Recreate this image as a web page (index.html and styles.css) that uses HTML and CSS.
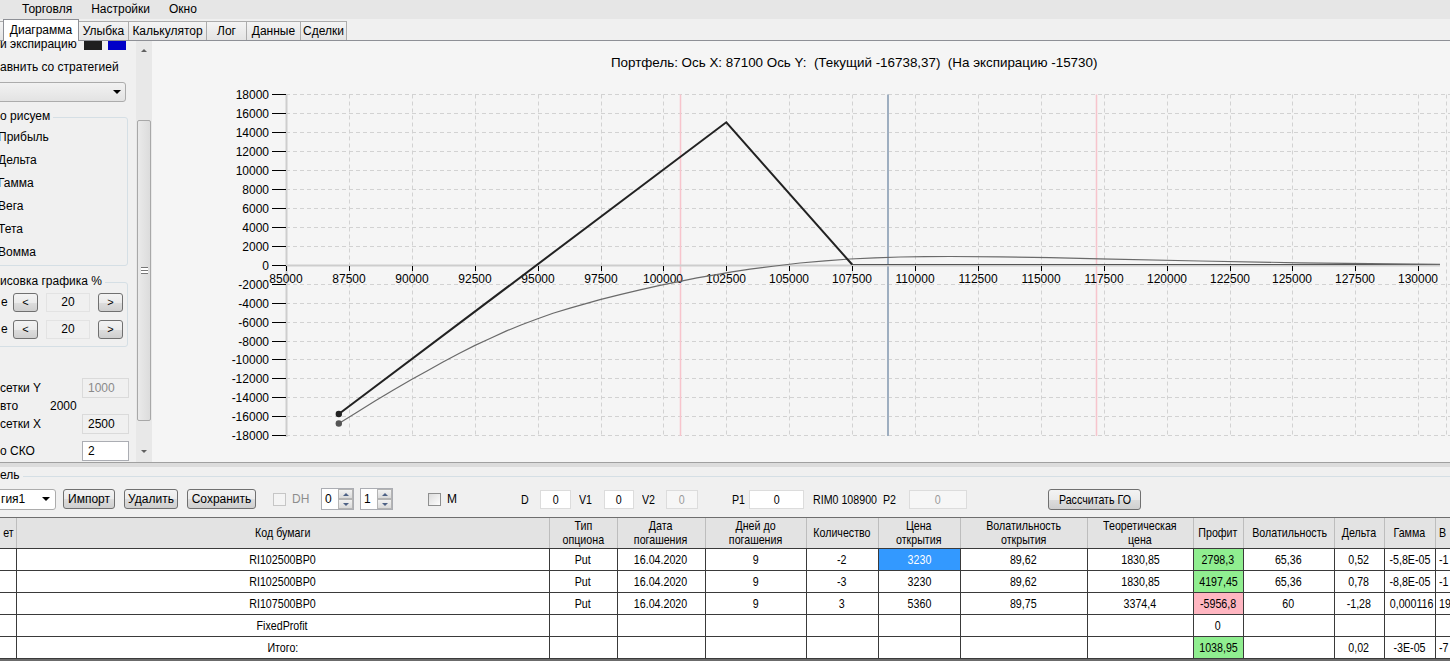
FILE: index.html
```html
<!DOCTYPE html>
<html lang="ru">
<head>
<meta charset="utf-8">
<title>Диаграмма</title>
<link rel="stylesheet" href="styles.css">
</head>
<body>
<div class="menubar">
  <span class="mi">Торговля</span>
  <span class="mi">Настройки</span>
  <span class="mi">Окно</span>
</div>
<div class="tabs">
  <div class="tab t0"></div>
  <div class="tab sel t1">Диаграмма</div>
  <div class="tab t2">Улыбка</div>
  <div class="tab t3">Калькулятор</div>
  <div class="tab t4">Лог</div>
  <div class="tab t5">Данные</div>
  <div class="tab t6">Сделки</div>
</div>
<div class="main">
  <aside class="side">
    <div class="side-inner">
      <div class="row r-exp"><span class="lbl">и экспирацию</span><span class="sw sw-black"></span><span class="sw sw-blue"></span></div>
      <div class="row r-cmp">авнить со стратегией</div>
      <div class="combo"><span class="arrow"></span></div>
      <div class="group g1">
        <div class="legend">о рисуем</div>
        <div class="item">Прибыль</div>
        <div class="item">Дельта</div>
        <div class="item">Гамма</div>
        <div class="item">Вега</div>
        <div class="item">Тета</div>
        <div class="item">Вомма</div>
      </div>
      <div class="group g2">
        <div class="legend">исовка графика %</div>
        <div class="steprow"><span class="e">е</span><span class="btn sm">&lt;</span><span class="tb ro">20</span><span class="btn sm">&gt;</span></div>
        <div class="steprow s2"><span class="e">е</span><span class="btn sm">&lt;</span><span class="tb ro">20</span><span class="btn sm">&gt;</span></div>
      </div>
      <div class="frow f1"><span class="fl">сетки Y</span><span class="tb dis">1000</span></div>
      <div class="frow f2"><span class="fl short">вто</span><span>2000</span></div>
      <div class="frow f3"><span class="fl">сетки X</span><span class="tb ro">2500</span></div>
      <div class="frow f4"><span class="fl">о СКО</span><span class="tb wh">2</span></div>
    </div>
  </aside>
  <div class="vscroll">
    <span class="up"></span>
    <div class="thumb"><span class="grip"></span></div>
    <span class="down"></span>
  </div>
  <section class="chart">
    <div class="title">Портфель: Ось X: 87100 Ось Y:  (Текущий -16738,37)  (На экспирацию -15730)</div>
    <svg class="plot" width="1298" height="377" viewBox="152 85 1298 377" xmlns="http://www.w3.org/2000/svg">
      <g stroke="#d2d2d2" stroke-width="1" stroke-dasharray="4 3" fill="none">
        <line x1="349.5" y1="94.5" x2="349.5" y2="436"/>
        <line x1="412.5" y1="94.5" x2="412.5" y2="436"/>
        <line x1="475.5" y1="94.5" x2="475.5" y2="436"/>
        <line x1="538.5" y1="94.5" x2="538.5" y2="436"/>
        <line x1="601.5" y1="94.5" x2="601.5" y2="436"/>
        <line x1="663.5" y1="94.5" x2="663.5" y2="436"/>
        <line x1="726.5" y1="94.5" x2="726.5" y2="436"/>
        <line x1="789.5" y1="94.5" x2="789.5" y2="436"/>
        <line x1="852.5" y1="94.5" x2="852.5" y2="436"/>
        <line x1="915.5" y1="94.5" x2="915.5" y2="436"/>
        <line x1="978.5" y1="94.5" x2="978.5" y2="436"/>
        <line x1="1041.5" y1="94.5" x2="1041.5" y2="436"/>
        <line x1="1104.5" y1="94.5" x2="1104.5" y2="436"/>
        <line x1="1167.5" y1="94.5" x2="1167.5" y2="436"/>
        <line x1="1230.5" y1="94.5" x2="1230.5" y2="436"/>
        <line x1="1292.5" y1="94.5" x2="1292.5" y2="436"/>
        <line x1="1355.5" y1="94.5" x2="1355.5" y2="436"/>
        <line x1="1418.5" y1="94.5" x2="1418.5" y2="436"/>
        <line x1="1446.5" y1="94.5" x2="1446.5" y2="436"/>
        <line x1="286" y1="94.5" x2="1450" y2="94.5"/>
        <line x1="286" y1="113.5" x2="1450" y2="113.5"/>
        <line x1="286" y1="132.5" x2="1450" y2="132.5"/>
        <line x1="286" y1="151.5" x2="1450" y2="151.5"/>
        <line x1="286" y1="170.5" x2="1450" y2="170.5"/>
        <line x1="286" y1="189.5" x2="1450" y2="189.5"/>
        <line x1="286" y1="208.5" x2="1450" y2="208.5"/>
        <line x1="286" y1="227.5" x2="1450" y2="227.5"/>
        <line x1="286" y1="246.5" x2="1450" y2="246.5"/>
        <line x1="286" y1="284.5" x2="1450" y2="284.5"/>
        <line x1="286" y1="303.5" x2="1450" y2="303.5"/>
        <line x1="286" y1="322.5" x2="1450" y2="322.5"/>
        <line x1="286" y1="341.5" x2="1450" y2="341.5"/>
        <line x1="286" y1="359.5" x2="1450" y2="359.5"/>
        <line x1="286" y1="378.5" x2="1450" y2="378.5"/>
        <line x1="286" y1="397.5" x2="1450" y2="397.5"/>
        <line x1="286" y1="416.5" x2="1450" y2="416.5"/>
        <line x1="286" y1="435.5" x2="1450" y2="435.5"/>
      </g>
      <line x1="680.5" y1="94.5" x2="680.5" y2="436" stroke="#f7c4cc" stroke-width="1.5"/>
      <line x1="1096.5" y1="94.5" x2="1096.5" y2="436" stroke="#f7c4cc" stroke-width="1.5"/>
      <line x1="888" y1="94.5" x2="888" y2="436" stroke="#9eaec0" stroke-width="2"/>
      <line x1="286.5" y1="94" x2="286.5" y2="437" stroke="#cdcdcd" stroke-width="2"/>
      <line x1="286" y1="265.5" x2="1440" y2="265.5" stroke="#cdcdcd" stroke-width="2"/>
      <g stroke="#000" stroke-width="1">
        <line x1="272" y1="94.5" x2="286" y2="94.5"/>
        <line x1="272" y1="113.5" x2="286" y2="113.5"/>
        <line x1="272" y1="132.5" x2="286" y2="132.5"/>
        <line x1="272" y1="151.5" x2="286" y2="151.5"/>
        <line x1="272" y1="170.5" x2="286" y2="170.5"/>
        <line x1="272" y1="189.5" x2="286" y2="189.5"/>
        <line x1="272" y1="208.5" x2="286" y2="208.5"/>
        <line x1="272" y1="227.5" x2="286" y2="227.5"/>
        <line x1="272" y1="246.5" x2="286" y2="246.5"/>
        <line x1="272" y1="265.5" x2="286" y2="265.5"/>
        <line x1="272" y1="284.5" x2="286" y2="284.5"/>
        <line x1="272" y1="303.5" x2="286" y2="303.5"/>
        <line x1="272" y1="322.5" x2="286" y2="322.5"/>
        <line x1="272" y1="341.5" x2="286" y2="341.5"/>
        <line x1="272" y1="359.5" x2="286" y2="359.5"/>
        <line x1="272" y1="378.5" x2="286" y2="378.5"/>
        <line x1="272" y1="397.5" x2="286" y2="397.5"/>
        <line x1="272" y1="416.5" x2="286" y2="416.5"/>
        <line x1="272" y1="435.5" x2="286" y2="435.5"/>
        <line x1="286.5" y1="266" x2="286.5" y2="271"/>
        <line x1="349.5" y1="266" x2="349.5" y2="271"/>
        <line x1="412.5" y1="266" x2="412.5" y2="271"/>
        <line x1="475.5" y1="266" x2="475.5" y2="271"/>
        <line x1="538.5" y1="266" x2="538.5" y2="271"/>
        <line x1="601.5" y1="266" x2="601.5" y2="271"/>
        <line x1="663.5" y1="266" x2="663.5" y2="271"/>
        <line x1="726.5" y1="266" x2="726.5" y2="271"/>
        <line x1="789.5" y1="266" x2="789.5" y2="271"/>
        <line x1="852.5" y1="266" x2="852.5" y2="271"/>
        <line x1="915.5" y1="266" x2="915.5" y2="271"/>
        <line x1="978.5" y1="266" x2="978.5" y2="271"/>
        <line x1="1041.5" y1="266" x2="1041.5" y2="271"/>
        <line x1="1104.5" y1="266" x2="1104.5" y2="271"/>
        <line x1="1167.5" y1="266" x2="1167.5" y2="271"/>
        <line x1="1230.5" y1="266" x2="1230.5" y2="271"/>
        <line x1="1292.5" y1="266" x2="1292.5" y2="271"/>
        <line x1="1355.5" y1="266" x2="1355.5" y2="271"/>
        <line x1="1418.5" y1="266" x2="1418.5" y2="271"/>
      </g>
      <g class="ylab" text-anchor="end">
        <text x="269" y="99">18000</text>
        <text x="269" y="118">16000</text>
        <text x="269" y="137">14000</text>
        <text x="269" y="156">12000</text>
        <text x="269" y="175">10000</text>
        <text x="269" y="194">8000</text>
        <text x="269" y="213">6000</text>
        <text x="269" y="232">4000</text>
        <text x="269" y="251">2000</text>
        <text x="269" y="270">0</text>
        <text x="269" y="289">-2000</text>
        <text x="269" y="308">-4000</text>
        <text x="269" y="327">-6000</text>
        <text x="269" y="346">-8000</text>
        <text x="269" y="364">-10000</text>
        <text x="269" y="383">-12000</text>
        <text x="269" y="402">-14000</text>
        <text x="269" y="421">-16000</text>
        <text x="269" y="440">-18000</text>
      </g>
      <g class="xlab" text-anchor="middle">
        <text x="286" y="283">85000</text>
        <text x="349" y="283">87500</text>
        <text x="412" y="283">90000</text>
        <text x="475" y="283">92500</text>
        <text x="538" y="283">95000</text>
        <text x="601" y="283">97500</text>
        <text x="663" y="283">100000</text>
        <text x="726" y="283">102500</text>
        <text x="789" y="283">105000</text>
        <text x="852" y="283">107500</text>
        <text x="915" y="283">110000</text>
        <text x="978" y="283">112500</text>
        <text x="1041" y="283">115000</text>
        <text x="1104" y="283">117500</text>
        <text x="1167" y="283">120000</text>
        <text x="1230" y="283">122500</text>
        <text x="1292" y="283">125000</text>
        <text x="1355" y="283">127500</text>
        <text x="1418" y="283">130000</text>
      </g>
      <line x1="852" y1="264.5" x2="1440" y2="264.5" stroke="#555" stroke-width="1"/>
      <polyline fill="none" stroke="#6a6a6a" stroke-width="1.2" stroke-linejoin="round" points="338.8,423.5 357,412.3 375,401.1 393,390.3 411.5,379.6 427,370.9 443,362 459,353.5 475,345.4 490,338.5 506,331.1 521,325 537,319 553,313.3 570,308.1 585,303.8 600,299.7 620,294.6 640,289.9 660,285.4 680,281.3 697,277.9 715,274.8 732,271.9 750,269.2 775,266 800,263 825,260.9 850,259 875,257.9 900,257 925,256.6 950,256.5 1000,256.8 1050,257.7 1100,258.8 1200,261 1300,262.8 1370,263.7 1440,264.4"/>
      <polyline fill="none" stroke="#222" stroke-width="2" points="338.8,414 726.3,122.3 852.1,264.5"/>
      <circle cx="338.8" cy="414" r="3.2" fill="#222"/>
      <circle cx="338.8" cy="423.5" r="3.2" fill="#555"/>
    </svg>
  </section>
</div>
<div class="splitter"></div>
<div class="bottom">
  <div class="ghead"><span class="glabel">ель</span><span class="gline"></span></div>
  <div class="toolbar">
    <div class="bcombo"><span>гия1</span><span class="arrow"></span></div>
    <span class="btn b-imp">Импорт</span>
    <span class="btn b-del">Удалить</span>
    <span class="btn b-save">Сохранить</span>
    <span class="chk dis c-dh"></span>
    <span class="lab dis l-dh">DH</span>
    <span class="num n0"><span class="nv">0</span><span class="spin"><i class="su"></i><i class="sd"></i></span></span>
    <span class="num n1"><span class="nv">1</span><span class="spin"><i class="su"></i><i class="sd"></i></span></span>
    <span class="chk c-m"></span>
    <span class="lab l-m">M</span>
    <span class="nar l-d"><span class="sq">D</span></span>
    <span class="tbx t-d"><span class="sq">0</span></span>
    <span class="nar l-v1"><span class="sq">V1</span></span>
    <span class="tbx t-v1"><span class="sq">0</span></span>
    <span class="nar l-v2"><span class="sq">V2</span></span>
    <span class="tbx dis t-v2"><span class="sq">0</span></span>
    <span class="nar l-p1"><span class="sq">P1</span></span>
    <span class="tbx t-p1"><span class="sq">0</span></span>
    <span class="nar l-rim"><span class="sq">RIM0 108900</span></span>
    <span class="nar l-p2"><span class="sq">P2</span></span>
    <span class="tbx dis t-p2"><span class="sq">0</span></span>
    <span class="btn nar b-go"><span class="sq">Рассчитать ГО</span></span>
  </div>
  <div class="gridwrap">
    <table class="grid">
      <colgroup>
        <col class="w0"><col class="w1"><col class="w2"><col class="w3"><col class="w4"><col class="w5"><col class="w6"><col class="w7"><col class="w8"><col class="w9"><col class="w10"><col class="w11"><col class="w12"><col class="w13">
      </colgroup>
      <thead>
        <tr>
          <th class="first"><span>ет</span></th><th><span>Код бумаги</span></th><th><span>Тип<br>опциона</span></th><th><span>Дата<br>погашения</span></th><th><span>Дней до<br>погашения</span></th><th><span>Количество</span></th><th><span>Цена<br>открытия</span></th><th><span>Волатильность<br>открытия</span></th><th><span>Теоретическая<br>цена</span></th><th><span>Профит</span></th><th><span>Волатильность</span></th><th><span>Дельта</span></th><th><span>Гамма</span></th><th class="last"><span>В</span></th>
        </tr>
      </thead>
      <tbody>
        <tr><td></td><td><span>RI102500BP0</span></td><td><span>Put</span></td><td><span>16.04.2020</span></td><td><span>9</span></td><td><span>-2</span></td><td class="blue"><span>3230</span></td><td><span>89,62</span></td><td><span>1830,85</span></td><td class="green"><span>2798,3</span></td><td><span>65,36</span></td><td><span>0,52</span></td><td><span>-5,8E-05</span></td><td class="last"><span>-1</span></td></tr>
        <tr><td></td><td><span>RI102500BP0</span></td><td><span>Put</span></td><td><span>16.04.2020</span></td><td><span>9</span></td><td><span>-3</span></td><td><span>3230</span></td><td><span>89,62</span></td><td><span>1830,85</span></td><td class="green"><span>4197,45</span></td><td><span>65,36</span></td><td><span>0,78</span></td><td><span>-8,8E-05</span></td><td class="last"><span>-1</span></td></tr>
        <tr><td></td><td><span>RI107500BP0</span></td><td><span>Put</span></td><td><span>16.04.2020</span></td><td><span>9</span></td><td><span>3</span></td><td><span>5360</span></td><td><span>89,75</span></td><td><span>3374,4</span></td><td class="pink"><span>-5956,8</span></td><td><span>60</span></td><td><span>-1,28</span></td><td><span>0,000116</span></td><td class="last"><span>19</span></td></tr>
        <tr><td></td><td><span>FixedProfit</span></td><td></td><td></td><td></td><td></td><td></td><td></td><td></td><td><span>0</span></td><td></td><td></td><td></td><td class="last"></td></tr>
        <tr><td></td><td><span>Итого:</span></td><td></td><td></td><td></td><td></td><td></td><td></td><td></td><td class="green"><span>1038,95</span></td><td></td><td><span>0,02</span></td><td><span>-3E-05</span></td><td class="last"><span>-7</span></td></tr>
      </tbody>
    </table>
  </div>
  <div class="hbar"></div>
</div>
</body>
</html>
```
FILE: styles.css
```css
* { box-sizing: border-box; }
html, body { margin: 0; padding: 0; }
body {
  width: 1450px;
  height: 661px;
  overflow: hidden;
  background: #f0f0f0;
  font-family: "Liberation Sans", Arial, sans-serif;
  font-size: 12px;
  color: #000;
}

/* menu */
.menubar {
  height: 19px;
  background: #e6e6e6;
  display: flex;
  align-items: center;
  padding-left: 22px;
  padding-bottom: 2px;
  gap: 19px;
  font-size: 12px;
}

/* tabs */
.tabs {
  height: 22px;
  display: flex;
  align-items: flex-end;
  border-bottom: 1px solid #8e9096;
  background: #f0f0f0;
}
.tab {
  height: 19px;
  margin-left: -1px;
  border: 1px solid #acacac;
  border-bottom: none;
  background: linear-gradient(#f4f4f4, #e4e4e4);
  text-align: center;
  line-height: 18px;
  white-space: nowrap;
  overflow: hidden;
}
.tab.sel {
  height: 22px;
  margin-bottom: -1px;
  background: #fff;
  border-color: #8e9096;
  line-height: 20px;
  position: relative;
  z-index: 1;
}
.t0 { width: 5px; margin-left: -1px; }
.t1 { width: 76px; }
.t2 { width: 51px; }
.t3 { width: 79px; }
.t4 { width: 41px; }
.t5 { width: 55px; }
.t6 { width: 47px; }

/* main area */
.main {
  height: 421px;
  display: flex;
}
.side {
  width: 136px;
  overflow: hidden;
  background: #f0f0f0;
}
.side-inner {
  margin-top: -6px;
}
.row { white-space: nowrap; }
.r-exp {
  height: 20px;
  display: flex;
  align-items: flex-start;
  line-height: 19px;
}
.r-exp .lbl { width: 84px; }
.sw {
  width: 18px;
  height: 15px;
}
.sw-black { background: #1f1f1f; }
.sw-blue { background: #0000c8; margin-left: 6px; }
.r-cmp {
  height: 24px;
  line-height: 24px;
}
.combo {
  margin-top: 3px;
  margin-left: -8px;
  width: 134px;
  height: 20px;
  border: 1px solid #acacac;
  border-radius: 3px;
  background: linear-gradient(#f2f2f2, #e3e3e3);
  display: flex;
  justify-content: flex-end;
  align-items: center;
  padding-right: 4px;
}
.arrow {
  width: 0;
  height: 0;
  border-left: 4px solid transparent;
  border-right: 4px solid transparent;
  border-top: 4px solid #000;
}
.group {
  margin-left: -10px;
  width: 138px;
  border: 1px solid #d5dfe5;
  border-radius: 3px;
}
.legend {
  width: max-content;
  margin-top: -10px;
  margin-left: 9px;
  padding-right: 3px;
  height: 16px;
  line-height: 16px;
  background: #f0f0f0;
  white-space: nowrap;
}
.g1 { margin-top: 15px; height: 149px; }
.g1 .item {
  height: 23px;
  line-height: 23px;
  padding-left: 7px;
}
.g1 .legend + .item { margin-top: 2px; }
.g2 { margin-top: 16px; height: 65px; }
.steprow {
  display: flex;
  align-items: center;
  height: 20px;
  margin-top: 3px;
  padding-left: 10px;
}
.steprow.s2 { margin-top: 7px; }
.steprow .e { width: 12px; }
.btn {
  display: inline-flex;
  align-items: center;
  justify-content: center;
  height: 20px;
  border: 1px solid #707070;
  border-radius: 3px;
  background: linear-gradient(#f3f3f3 0%, #ebebeb 50%, #dddddd 51%, #cfcfcf 100%);
  white-space: nowrap;
}
.btn.sm { width: 25px; height: 19px; font-size: 11px; }
.tb {
  display: inline-flex;
  align-items: center;
  height: 19px;
  border: 1px solid #dadada;
  background: #f0f0f0;
  padding-left: 5px;
}
.steprow .tb {
  width: 44px;
  justify-content: center;
  padding-left: 0;
  margin: 0 8px;
  border-color: #e3e3e3;
  background: #f0f0f0;
}
.tb.dis { color: #8a8a8a; }
.tb.wh { background: #fff; border-color: #abadb3; }
.frow {
  display: flex;
  align-items: center;
  height: 20px;
  white-space: nowrap;
}
.frow .fl { width: 82px; }
.frow .fl.short { width: 50px; }
.frow .tb { width: 47px; height: 20px; }
.f1 { margin-top: 31px; }
.f2 { height: 16px; }
.f3 { height: 19px; }
.f4 { margin-top: 8px; }

.vscroll {
  width: 16px;
  background: #e8e8e8;
  display: flex;
  flex-direction: column;
  align-items: center;
}
.up, .down {
  width: 0;
  height: 0;
  border-left: 3px solid transparent;
  border-right: 3px solid transparent;
}
.up { border-bottom: 3px solid #606060; margin-top: 8px; }
.down { border-top: 3px solid #606060; margin-top: 29px; }
.thumb {
  margin-top: 68px;
  width: 14px;
  height: 301px;
  border: 1px solid #a8a8a8;
  border-radius: 2px;
  background: linear-gradient(90deg, #eaeaea, #dcdcdc);
  display: flex;
  align-items: center;
  justify-content: center;
}
.grip {
  width: 7px;
  height: 7px;
  border-top: 1px solid #777;
  border-bottom: 1px solid #777;
  background: linear-gradient(#fff 0 2px, #777 2px 3px, #fff 3px);
}

.chart {
  flex: 1;
  background: #f5f5f5;
  display: flex;
  flex-direction: column;
  overflow: hidden;
}
.title {
  height: 44px;
  line-height: 44px;
  padding-left: 459px;
  white-space: pre;
  font-size: 13.4px;
  color: #000;
}
.plot { display: block; }
.plot text {
  font-family: "Liberation Sans", Arial, sans-serif;
  font-size: 12px;
  fill: #000;
}

.splitter {
  height: 5px;
  border-top: 1px solid #a0a0a0;
  background: #dcdcdc;
}

/* bottom */
.bottom {
  height: 194px;
  background: #f0f0f0;
}
.ghead {
  height: 16px;
  display: flex;
  align-items: flex-start;
}
.glabel {
  line-height: 16px;
  padding-right: 3px;
}
.gline {
  flex: 1;
  margin-top: 9px;
  border-top: 1px solid #d5dfe5;
}
.toolbar {
  margin-top: 5px;
  height: 22px;
  display: flex;
  align-items: center;
  white-space: nowrap;
}
.bcombo {
  margin-left: -10px;
  width: 66px;
  height: 21px;
  border: 1px solid #acacac;
  border-radius: 3px;
  background: #fff;
  display: flex;
  align-items: center;
  justify-content: space-between;
  padding: 0 5px 0 10px;
}
.b-imp { margin-left: 7px; width: 52px; }
.b-del { margin-left: 9px; width: 54px; }
.b-save { margin-left: 9px; width: 69px; }
.chk {
  width: 13px;
  height: 13px;
  border: 1px solid #8e8f8f;
  background: linear-gradient(135deg, #dcdcdc, #fdfdfd);
}
.chk.dis { border-color: #c6c6c6; background: #f4f4f4; }
.c-dh { margin-left: 17px; }
.lab { margin-left: 6px; }
.lab.dis { color: #8d8d8d; }
.l-dh { width: 16px; }
.num {
  height: 22px;
  width: 33px;
  border: 1px solid #abadb3;
  background: #fff;
  display: flex;
  align-items: center;
  justify-content: space-between;
  padding-left: 3px;
}
.n0 { margin-left: 13px; }
.n1 { margin-left: 6px; }
.spin {
  width: 15px;
  height: 20px;
  display: flex;
  flex-direction: column;
}
.spin i {
  flex: 1;
  border: 1px solid #b4b4b4;
  background: linear-gradient(#f2f2f2, #dadada);
  display: flex;
  align-items: center;
  justify-content: center;
}
.spin i::after {
  content: "";
  width: 0;
  height: 0;
  border-left: 3px solid transparent;
  border-right: 3px solid transparent;
}
.su::after { border-bottom: 3px solid #4d6185; }
.sd::after { border-top: 3px solid #4d6185; }
.c-m { margin-left: 35px; }
.l-m { width: 10px; }
.nar, .tbx {
  font-family: "Liberation Sans", Arial, sans-serif;
  font-size: 13px;
}
.sq {
  display: inline-block;
  transform: scaleX(0.82);
}
.nar > .sq { transform-origin: left center; }
.tbx > .sq, .btn > .sq { transform-origin: center; }
.tbx {
  height: 19px;
  border: 1px solid #dcdcdc;
  background: #fff;
  display: inline-flex;
  align-items: center;
  justify-content: center;
}
.tbx.dis { background: #f6f6f6; color: #9a9a9a; }
.l-d { margin-left: 64px; width: 8px; }
.t-d { margin-left: 11px; width: 31px; }
.l-v1 { margin-left: 8px; width: 13px; }
.t-v1 { margin-left: 12px; width: 30px; }
.l-v2 { margin-left: 8px; width: 14px; }
.t-v2 { margin-left: 10px; width: 32px; }
.l-p1 { margin-left: 34px; width: 13px; }
.t-p1 { margin-left: 4px; width: 55px; }
.l-rim { margin-left: 9px; width: 66px; }
.l-p2 { margin-left: 4px; width: 14px; }
.t-p2 { margin-left: 12px; width: 58px; }
.b-go { margin-left: 81px; width: 93px; height: 21px; }

/* grid */
.gridwrap {
  margin-top: 7px;
  width: 1450px;
  overflow: hidden;
  border-top: 1px solid #6e6e6e;
}
.grid {
  width: 1495px;
  table-layout: fixed;
  border-collapse: collapse;
  font-family: "Liberation Sans", Arial, sans-serif;
  font-size: 13px;
}
.grid th > span, .grid td > span {
  display: inline-block;
  transform: scaleX(0.82);
  transform-origin: center;
}
.grid .last > span { transform-origin: left center; }
.grid th.first > span { transform-origin: right center; }
.w0 { width: 16px; }
.w1 { width: 533px; }
.w2 { width: 68px; }
.w3 { width: 88px; }
.w4 { width: 101px; }
.w5 { width: 72px; }
.w6 { width: 82px; }
.w7 { width: 127px; }
.w8 { width: 106px; }
.w9 { width: 50px; }
.w10 { width: 91px; }
.w11 { width: 50px; }
.w12 { width: 51px; }
.w13 { width: 60px; }
.grid th {
  height: 30px;
  padding: 0;
  font-weight: normal;
  line-height: 14px;
  background: #e3e3e3;
  border-right: 1px solid #bdbdbd;
  border-bottom: 1px solid #3a3a3a;
  white-space: nowrap;
  overflow: hidden;
}
.grid th.first { text-align: right; padding-right: 2px; }
.grid td {
  height: 22px;
  padding: 0;
  text-align: center;
  background: #fff;
  border: 1px solid #3a3a3a;
  white-space: nowrap;
  overflow: hidden;
}
.grid td:first-child { border-left: none; }
.grid .last { text-align: left; padding-left: 3px; }
.grid td.blue { background: #3399ff; color: #fff; }
.grid td.green { background: #90ee90; }
.grid td.pink { background: #ffb6c1; }
.hbar {
  height: 4px;
  background: #6b6b6b;
}
```
